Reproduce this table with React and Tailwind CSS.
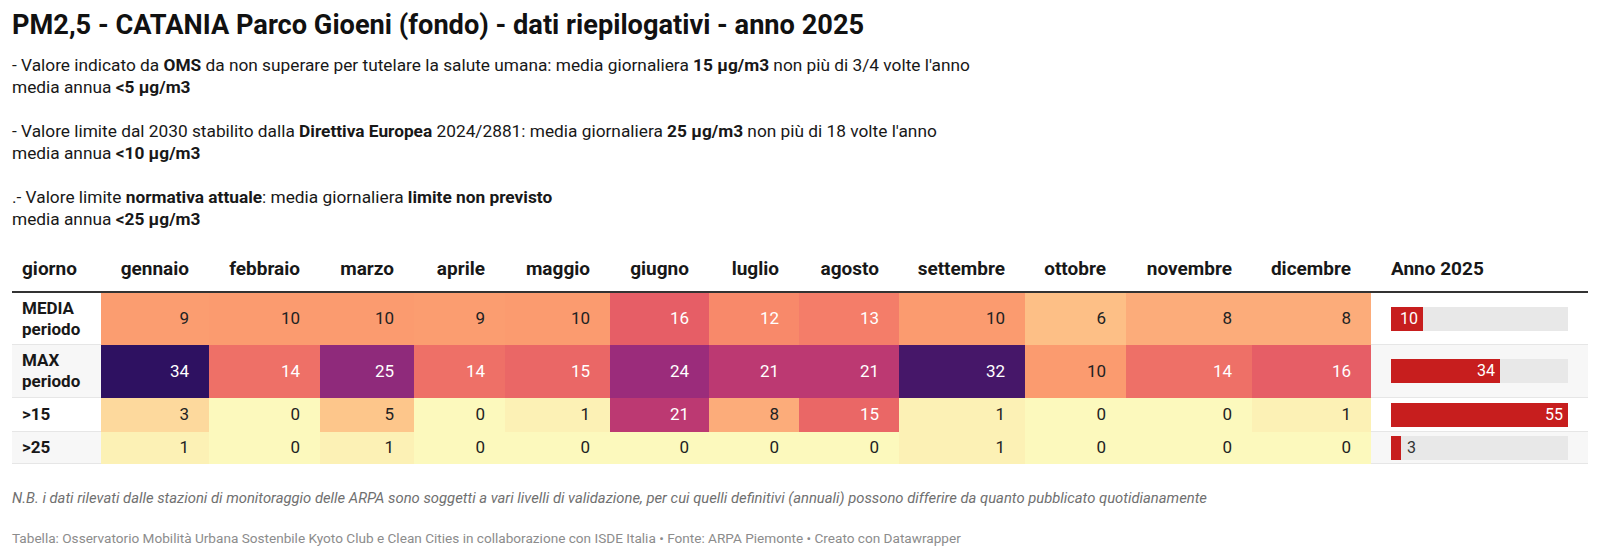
import React from "react"

const months = [
  "gennaio",
  "febbraio",
  "marzo",
  "aprile",
  "maggio",
  "giugno",
  "luglio",
  "agosto",
  "settembre",
  "ottobre",
  "novembre",
  "dicembre",
]

// heat scale used for the monthly cells
const cellColor = {
  0: "bg-[#fcf9bd]",
  1: "bg-[#fcf1b5]",
  3: "bg-[#fdd99d]",
  5: "bg-[#fdc68b]",
  6: "bg-[#fdbf86]",
  8: "bg-[#fcac7a]",
  9: "bg-[#fb9d70]",
  10: "bg-[#fb9b6f]",
  12: "bg-[#f8896a]",
  13: "bg-[#f47d69]",
  14: "bg-[#ee7067]",
  15: "bg-[#ea6766]",
  16: "bg-[#e65e66]",
  21: "bg-[#bc3972]",
  24: "bg-[#9b2c7b]",
  25: "bg-[#8f2a7b]",
  32: "bg-[#461769]",
  34: "bg-[#2e1161]",
}

const rows = [
  {
    label: ["MEDIA", "periodo"],
    values: [9, 10, 10, 9, 10, 16, 12, 13, 10, 6, 8, 8],
    total: 10,
    height: "h-[52px]",
    stripe: false,
  },
  {
    label: ["MAX", "periodo"],
    values: [34, 14, 25, 14, 15, 24, 21, 21, 32, 10, 14, 16],
    total: 34,
    height: "h-[53px]",
    stripe: true,
  },
  {
    label: [">15"],
    values: [3, 0, 5, 0, 1, 21, 8, 15, 1, 0, 0, 1],
    total: 55,
    height: "h-[34px]",
    stripe: false,
  },
  {
    label: [">25"],
    values: [1, 0, 1, 0, 0, 0, 0, 0, 1, 0, 0, 0],
    total: 3,
    height: "h-[32px]",
    stripe: true,
  },
]

const gridCols =
  "grid grid-cols-[89px_108px_111px_94px_91px_105px_99px_90px_100px_126px_101px_126px_119px_217px]"

const BAR_MAX = 55
const TRACK = 177

const Bar = ({ value }) => {
  const w = Math.round((value / BAR_MAX) * TRACK)
  const inside = w > 24
  return (
    <div className="relative h-[24px] w-[177px] bg-[#e8e8e8]">
      <div
        className="flex h-full items-center justify-end bg-[#c71e1e] pr-[5px]"
        style={{ width: w }}
      >
        {inside && (
          <span className="text-[16px] leading-none text-white">{value}</span>
        )}
      </div>
      {!inside && (
        <span
          className="absolute top-1/2 -translate-y-1/2 text-[16px] leading-none text-[#333]"
          style={{ left: w + 6 }}
        >
          {value}
        </span>
      )}
    </div>
  )
}

const App = () => {
  return (
    <div className="w-[1600px] h-[559px] bg-white px-[12px] pt-[9px] font-['Roboto',sans-serif] text-[#181818]">
      {/* ── Title + notes ─────────────────────────────── */}
      <h1 className="text-[27.2px] leading-[32px] font-bold text-[#111]">
        PM2,5 - CATANIA Parco Gioeni (fondo) - dati riepilogativi - anno 2025
      </h1>
      <div className="mt-[13px] text-[17.3px] leading-[22px]">
        <p>
          - Valore indicato da <b>OMS</b> da non superare per tutelare la
          salute umana: media giornaliera <b>15 µg/m3</b> non più di 3/4 volte
          l'anno
        </p>
        <p>
          media annua <b>&lt;5 µg/m3</b>
        </p>
        <p>&nbsp;</p>
        <p>
          - Valore limite dal 2030 stabilito dalla <b>Direttiva Europea</b>{" "}
          2024/2881: media giornaliera <b>25 µg/m3</b> non più di 18 volte
          l'anno
        </p>
        <p>
          media annua <b>&lt;10 µg/m3</b>
        </p>
        <p>&nbsp;</p>
        <p>
          .- Valore limite <b>normativa attuale</b>: media giornaliera{" "}
          <b>limite non previsto</b>
        </p>
        <p>
          media annua <b>&lt;25 µg/m3</b>
        </p>
      </div>

      {/* ── Table ─────────────────────────────────────── */}
      <div className="mt-[18px] w-[1576px]">
        <div
          className={`${gridCols} h-[45px] items-center border-b-2 border-[#333] text-[19px] font-bold text-[#181818]`}
        >
          <div className="pl-[10px]">giorno</div>
          {months.map((m) => (
            <div key={m} className="pr-[20px] text-right">
              {m}
            </div>
          ))}
          <div className="pl-[20px]">Anno 2025</div>
        </div>

        {rows.map((row, i) => (
          <div key={i} className={`${gridCols} ${row.height}`}>
            <div
              className={`flex flex-col justify-center border-b border-[#e6e6e6] pl-[10px] text-[17px] leading-[21px] font-bold ${
                row.stripe ? "bg-[#f7f7f7]" : "bg-white"
              }`}
            >
              {row.label.map((l) => (
                <span key={l}>{l}</span>
              ))}
            </div>
            {row.values.map((v, j) => (
              <div
                key={j}
                className={`flex items-center justify-end pr-[20px] text-[17px] ${
                  cellColor[v]
                } ${v >= 11 ? "text-white" : "text-[#222]"}`}
              >
                {v}
              </div>
            ))}
            <div
              className={`flex items-center border-b border-[#e6e6e6] pl-[20px] ${
                row.stripe ? "bg-[#f7f7f7]" : "bg-white"
              }`}
            >
              <Bar value={row.total} />
            </div>
          </div>
        ))}
      </div>

      {/* ── Notes ─────────────────────────────────────── */}
      <p className="mt-[24px] text-[14.8px] leading-[20px] italic text-[#707070]">
        N.B. i dati rilevati dalle stazioni di monitoraggio delle ARPA sono
        soggetti a vari livelli di validazione, per cui quelli definitivi
        (annuali) possono differire da quanto pubblicato quotidianamente
      </p>
      <p className="mt-[20px] text-[13.6px] leading-[20px] text-[#8c8c8c]">
        Tabella: Osservatorio Mobilità Urbana Sostenbile Kyoto Club e Clean
        Cities in collaborazione con ISDE Italia • Fonte: ARPA Piemonte • Creato
        con Datawrapper
      </p>
    </div>
  )
}

export default App
